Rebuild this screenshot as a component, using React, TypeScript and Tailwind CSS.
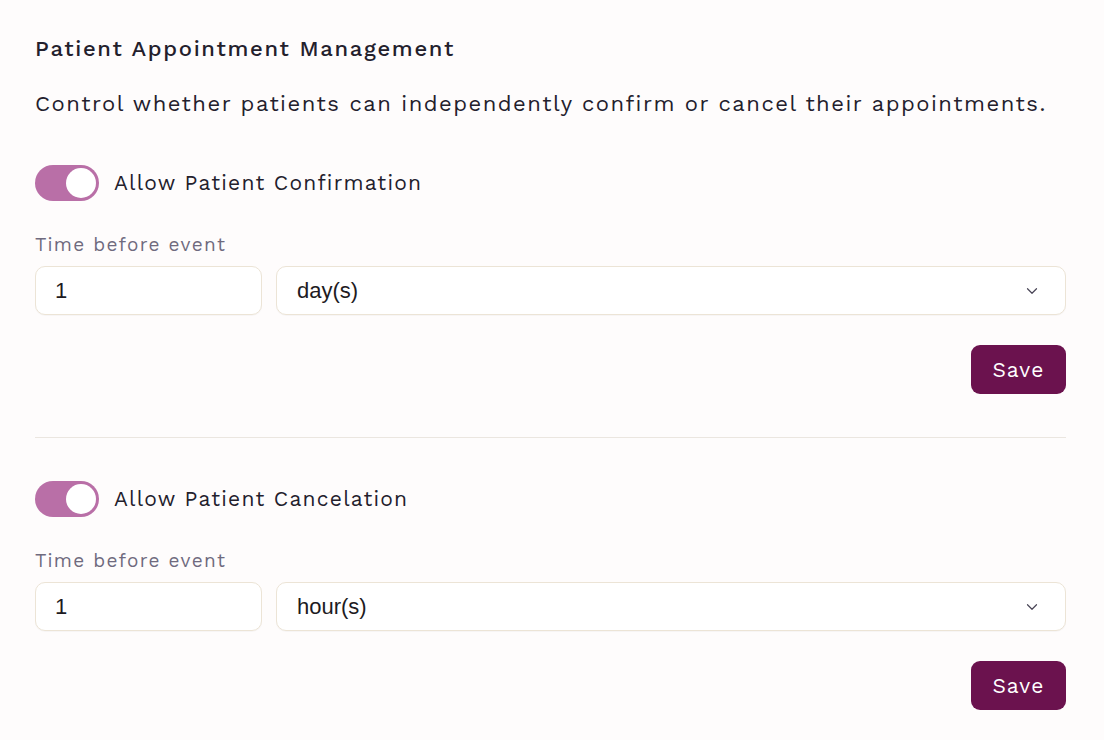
import { ChevronDown } from "lucide-react";

const font = { fontFamily: '"Work Sans", Inter, "Noto Sans", sans-serif' };
const fieldFont = { fontFamily: '"Liberation Sans", Arial, sans-serif' };

function Toggle({ label }: { label: string }) {
  return (
    <div className="flex items-center gap-[15px]">
      <button
        type="button"
        className="relative h-[36px] w-[64px] shrink-0 rounded-full bg-[#b96fa7]"
      >
        <span className="absolute right-[3px] top-[3px] h-[30px] w-[30px] rounded-full bg-white" />
      </button>
      <span className="text-[21px] tracking-[0.058em] text-[#23202c]">{label}</span>
    </div>
  );
}

function Section({ label, unit }: { label: string; unit: string }) {
  return (
    <div className="flex flex-col">
      <Toggle label={label} />
      <div className="mt-[31px] text-[19px] leading-[26px] tracking-[0.068em] text-[#6f6a7e]">
        Time before event
      </div>
      <div className="mt-[8px] flex gap-[14px]">
        <div
          className="flex h-[49px] w-[227px] items-center rounded-[10px] border border-[#ece4d6] bg-white px-[19px] text-[22px] text-[#1d1b22] shadow-[0_1px_1px_rgba(0,0,0,0.03)]"
          style={fieldFont}
        >
          1
        </div>
        <div
          className="flex h-[49px] flex-1 items-center justify-between rounded-[10px] border border-[#ece4d6] bg-white pl-[20px] pr-[24px] text-[22px] text-[#1d1b22] shadow-[0_1px_1px_rgba(0,0,0,0.03)]"
          style={fieldFont}
        >
          <span>{unit}</span>
          <ChevronDown className="h-[18px] w-[18px] text-[#4a4657]" strokeWidth={1.6} />
        </div>
      </div>
      <div className="mt-[30px] flex justify-end">
        <button
          type="button"
          className="h-[49px] w-[95px] rounded-[9px] bg-[#6b124e] text-[21px] tracking-[0.05em] text-white"
        >
          Save
        </button>
      </div>
    </div>
  );
}

export default function App() {
  return (
    <div className="min-h-[740px] w-[1104px] bg-[#fefcfc] px-[35px] pt-[34px]" style={font}>
      <div className="w-[1031px]">
        <h2 className="text-[22px] font-medium leading-[30px] tracking-[0.076em] text-[#23202c]">
          Patient Appointment Management
        </h2>
        <p className="mt-[25px] text-[22px] leading-[30px] tracking-[0.068em] text-[#23202c]">
          Control whether patients can independently confirm or cancel their appointments.
        </p>
        <div className="mt-[46px]">
          <Section label="Allow Patient Confirmation" unit="day(s)" />
        </div>
        <div className="mt-[43px] border-t border-[#ebe6e0]" />
        <div className="mt-[43px]">
          <Section label="Allow Patient Cancelation" unit="hour(s)" />
        </div>
      </div>
    </div>
  );
}
